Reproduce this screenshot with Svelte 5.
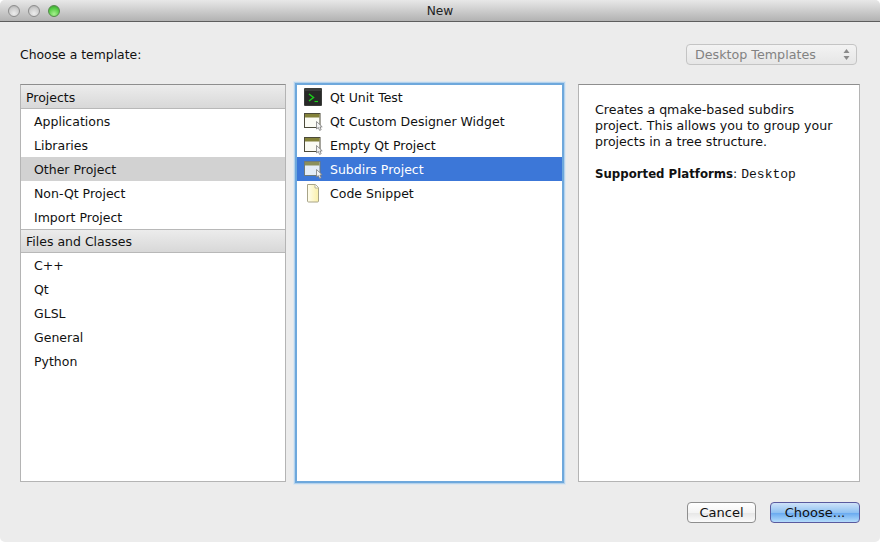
<script>
  const groups = [
    { title: 'Projects', items: ['Applications', 'Libraries', 'Other Project', 'Non-Qt Project', 'Import Project'] },
    { title: 'Files and Classes', items: ['C++', 'Qt', 'GLSL', 'General', 'Python'] }
  ];
  const templates = [
    { name: 'Qt Unit Test', icon: 'term' },
    { name: 'Qt Custom Designer Widget', icon: 'win' },
    { name: 'Empty Qt Project', icon: 'win' },
    { name: 'Subdirs Project', icon: 'win', selected: true },
    { name: 'Code Snippet', icon: 'doc' }
  ];
</script>

<div class="window">
  <header class="titlebar">
    <div class="lights">
      <span class="light"></span>
      <span class="light"></span>
      <span class="light green"></span>
    </div>
    <div class="title">New</div>
  </header>

  <main class="content">
    <div class="toprow">
      <div class="choose">Choose a template:</div>
      <div class="select">
        <span>Desktop Templates</span>
        <svg width="7" height="13" viewBox="0 0 7 13"><path d="M3.5 1 L6.5 5 H0.5Z M3.5 12 L6.5 8 H0.5Z" fill="#8a8a8a"/></svg>
      </div>
    </div>

    <div class="panels">
      <section class="panel left">
        {#each groups as g}
          <div class="group">{g.title}</div>
          {#each g.items as it}
            <div class="row" class:current={it === 'Other Project'}>{it}</div>
          {/each}
        {/each}
      </section>

      <section class="panel middle">
        {#each templates as t}
          <div class="trow" class:selected={t.selected}>
            {#if t.icon === 'term'}
              <svg class="ic" width="18" height="18" viewBox="0 0 18 18">
                <rect x="0" y="0" width="18" height="18" rx="1" fill="#3a3c3a"/>
                <rect x="1" y="1" width="16" height="16" fill="#272927"/>
                <rect x="1" y="1" width="16" height="2" fill="#3c3e3c"/>
                <path d="M5 6 L9.5 9.5 L5 13" fill="none" stroke="#1bd01b" stroke-width="1.5"/>
                <path d="M10.5 13.5 H14" stroke="#1bd01b" stroke-width="1.2"/>
              </svg>
            {:else if t.icon === 'win'}
              <svg class="ic" width="18" height="18" viewBox="0 0 18 18">
                <rect x="0.5" y="1.5" width="15.5" height="14" fill={t.selected ? '#e4ecf6' : '#fbfbf4'} stroke={t.selected ? '#6f7a78' : '#4c4a3a'}/>
                <rect x="1" y="2" width="14.5" height="3.5" fill={t.selected ? '#8b8f5a' : '#84823a'}/>
                <path d="M12.5 9.5 L12.5 17 L14.3 15.6 L15.6 18.4 L17.2 17.7 L15.9 15 L18.2 14.8 Z" fill="#f2f2f2" stroke="#7c7c7c" stroke-width="0.8"/>
              </svg>
            {:else}
              <svg class="ic" width="18" height="18" viewBox="0 0 18 18">
                <defs>
                  <linearGradient id="docfill" x1="0" x2="1" y1="0" y2="0">
                    <stop offset="0" stop-color="#fffef0"/>
                    <stop offset="1" stop-color="#fbf0a8"/>
                  </linearGradient>
                </defs>
                <path d="M3.5 0.5 H11.5 L14.5 3.5 V17 Q14.5 18 13.5 18 H4.5 Q3.5 18 3.5 17 Z" fill="url(#docfill)" stroke="#a8a488"/>
                <path d="M11 0.5 V4 H14.5" fill="#fff" stroke="#b8b498"/>
              </svg>
            {/if}
            <span>{t.name}</span>
          </div>
        {/each}
      </section>

      <section class="panel right">
        <p>Creates a qmake-based subdirs<br />project. This allows you to group your<br />projects in a tree structure.</p>
        <p class="platforms"><b>Supported Platforms</b>: <code>Desktop</code></p>
      </section>
    </div>

    <footer class="actions">
      <button class="btn">Cancel</button>
      <button class="btn primary">Choose...</button>
    </footer>
  </main>
</div>

<style>
  :global(body) {
    margin: 0;
    background: #fff;
  }
  .window {
    width: 880px;
    height: 542px;
    display: flex;
    flex-direction: column;
    background: #ececec;
    border-radius: 5px;
    overflow: hidden;
    font-family: "DejaVu Sans", sans-serif;
    font-size: 12.5px;
    color: #111;
  }
  .titlebar {
    height: 21px;
    flex: none;
    position: relative;
    display: flex;
    align-items: center;
    justify-content: center;
    background: linear-gradient(#e8e8e8, #b2b2b2);
    border-bottom: 1px solid #5e5e5e;
  }
  .lights {
    position: absolute;
    left: 8px;
    top: 5px;
    display: flex;
    gap: 8px;
  }
  .light {
    width: 12px;
    height: 12px;
    border-radius: 50%;
    box-sizing: border-box;
    border: 1px solid #8c8c8c;
    background: radial-gradient(circle at 50% 75%, #ececec, #cfcfcf 55%, #a9a9a9);
  }
  .light.green {
    border-color: #54894a;
    background: radial-gradient(circle at 50% 80%, #a8f090, #55cc44 60%, #379530);
  }
  .title {
    font-size: 12.2px;
    color: #222;
  }
  .content {
    flex: 1;
    display: flex;
    flex-direction: column;
    padding: 21px 20px 19px;
    min-height: 0;
  }
  .toprow {
    height: 22px;
    display: flex;
    justify-content: space-between;
    align-items: center;
  }
  .choose {
    font-size: 12.4px;
  }
  .select {
    width: 171px;
    height: 21px;
    margin-right: 3px;
    box-sizing: border-box;
    padding: 0 6px 0 8px;
    display: flex;
    align-items: center;
    justify-content: space-between;
    border: 1px solid #c4c4c4;
    border-radius: 4px;
    background: linear-gradient(#f3f3f3, #e6e6e6);
    color: #828282;
    font-size: 12.7px;
  }
  .panels {
    flex: none;
    height: 398px;
    margin-top: 19px;
    display: flex;
  }
  .panel {
    box-sizing: border-box;
    background: #fff;
    border: 1px solid #b4b4b4;
    border-top-color: #8e8e8e;
  }
  .left {
    width: 266px;
    margin-right: 11px;
  }
  .middle {
    width: 265px;
    height: 396px;
    margin: 1px 16px 0 0;
    border: none;
    box-shadow: 0 0 0 2px #6ea8dc, 0 0 0 3px #b4d2ec, 0 0 0 4px #dde7f0;
  }
  .right {
    width: 282px;
    padding: 17px 16px;
    line-height: 16px;
    font-size: 12.6px;
  }
  .group {
    height: 24px;
    box-sizing: border-box;
    padding-left: 5px;
    line-height: 25px;
    background: linear-gradient(#ececec, #d8d8d8);
    border-bottom: 1px solid #b8b8b8;
  }
  .row + .group {
    border-top: 1px solid #b8b8b8;
    line-height: 23px;
  }
  .row {
    height: 24px;
    line-height: 25px;
    padding-left: 13px;
  }
  .row.current {
    background: #d2d2d2;
  }
  .trow {
    height: 24px;
    display: flex;
    align-items: center;
    padding-left: 7px;
    gap: 8px;
  }
  .trow.selected {
    background: #3c77d8;
    color: #fff;
  }
  .ic {
    flex: none;
    overflow: visible;
  }
  .right p {
    margin: 0;
  }
  .right .platforms {
    margin-top: 16px;
  }
  .right b {
    font-size: 11.75px;
  }
  .right code {
    font-family: "Liberation Mono", monospace;
    font-size: 13px;
  }
  .actions {
    margin-top: 20px;
    display: flex;
    justify-content: flex-end;
    gap: 14px;
  }
  .btn {
    height: 21px;
    box-sizing: border-box;
    width: 69px;
    padding: 0;
    border: 1px solid #8e8e8e;
    border-radius: 4px;
    background: linear-gradient(#fff 0%, #f4f4f4 50%, #e6e6e6 51%, #fbfbfb 100%);
    font: inherit;
    font-size: 13px;
    color: #111;
  }
  .btn.primary {
    width: 90px;
    border-color: #5a5a9e;
    background: linear-gradient(#cfe3f9 0%, #8fc1f2 50%, #6cacf0 55%, #b4dcfb 100%);
  }
</style>
